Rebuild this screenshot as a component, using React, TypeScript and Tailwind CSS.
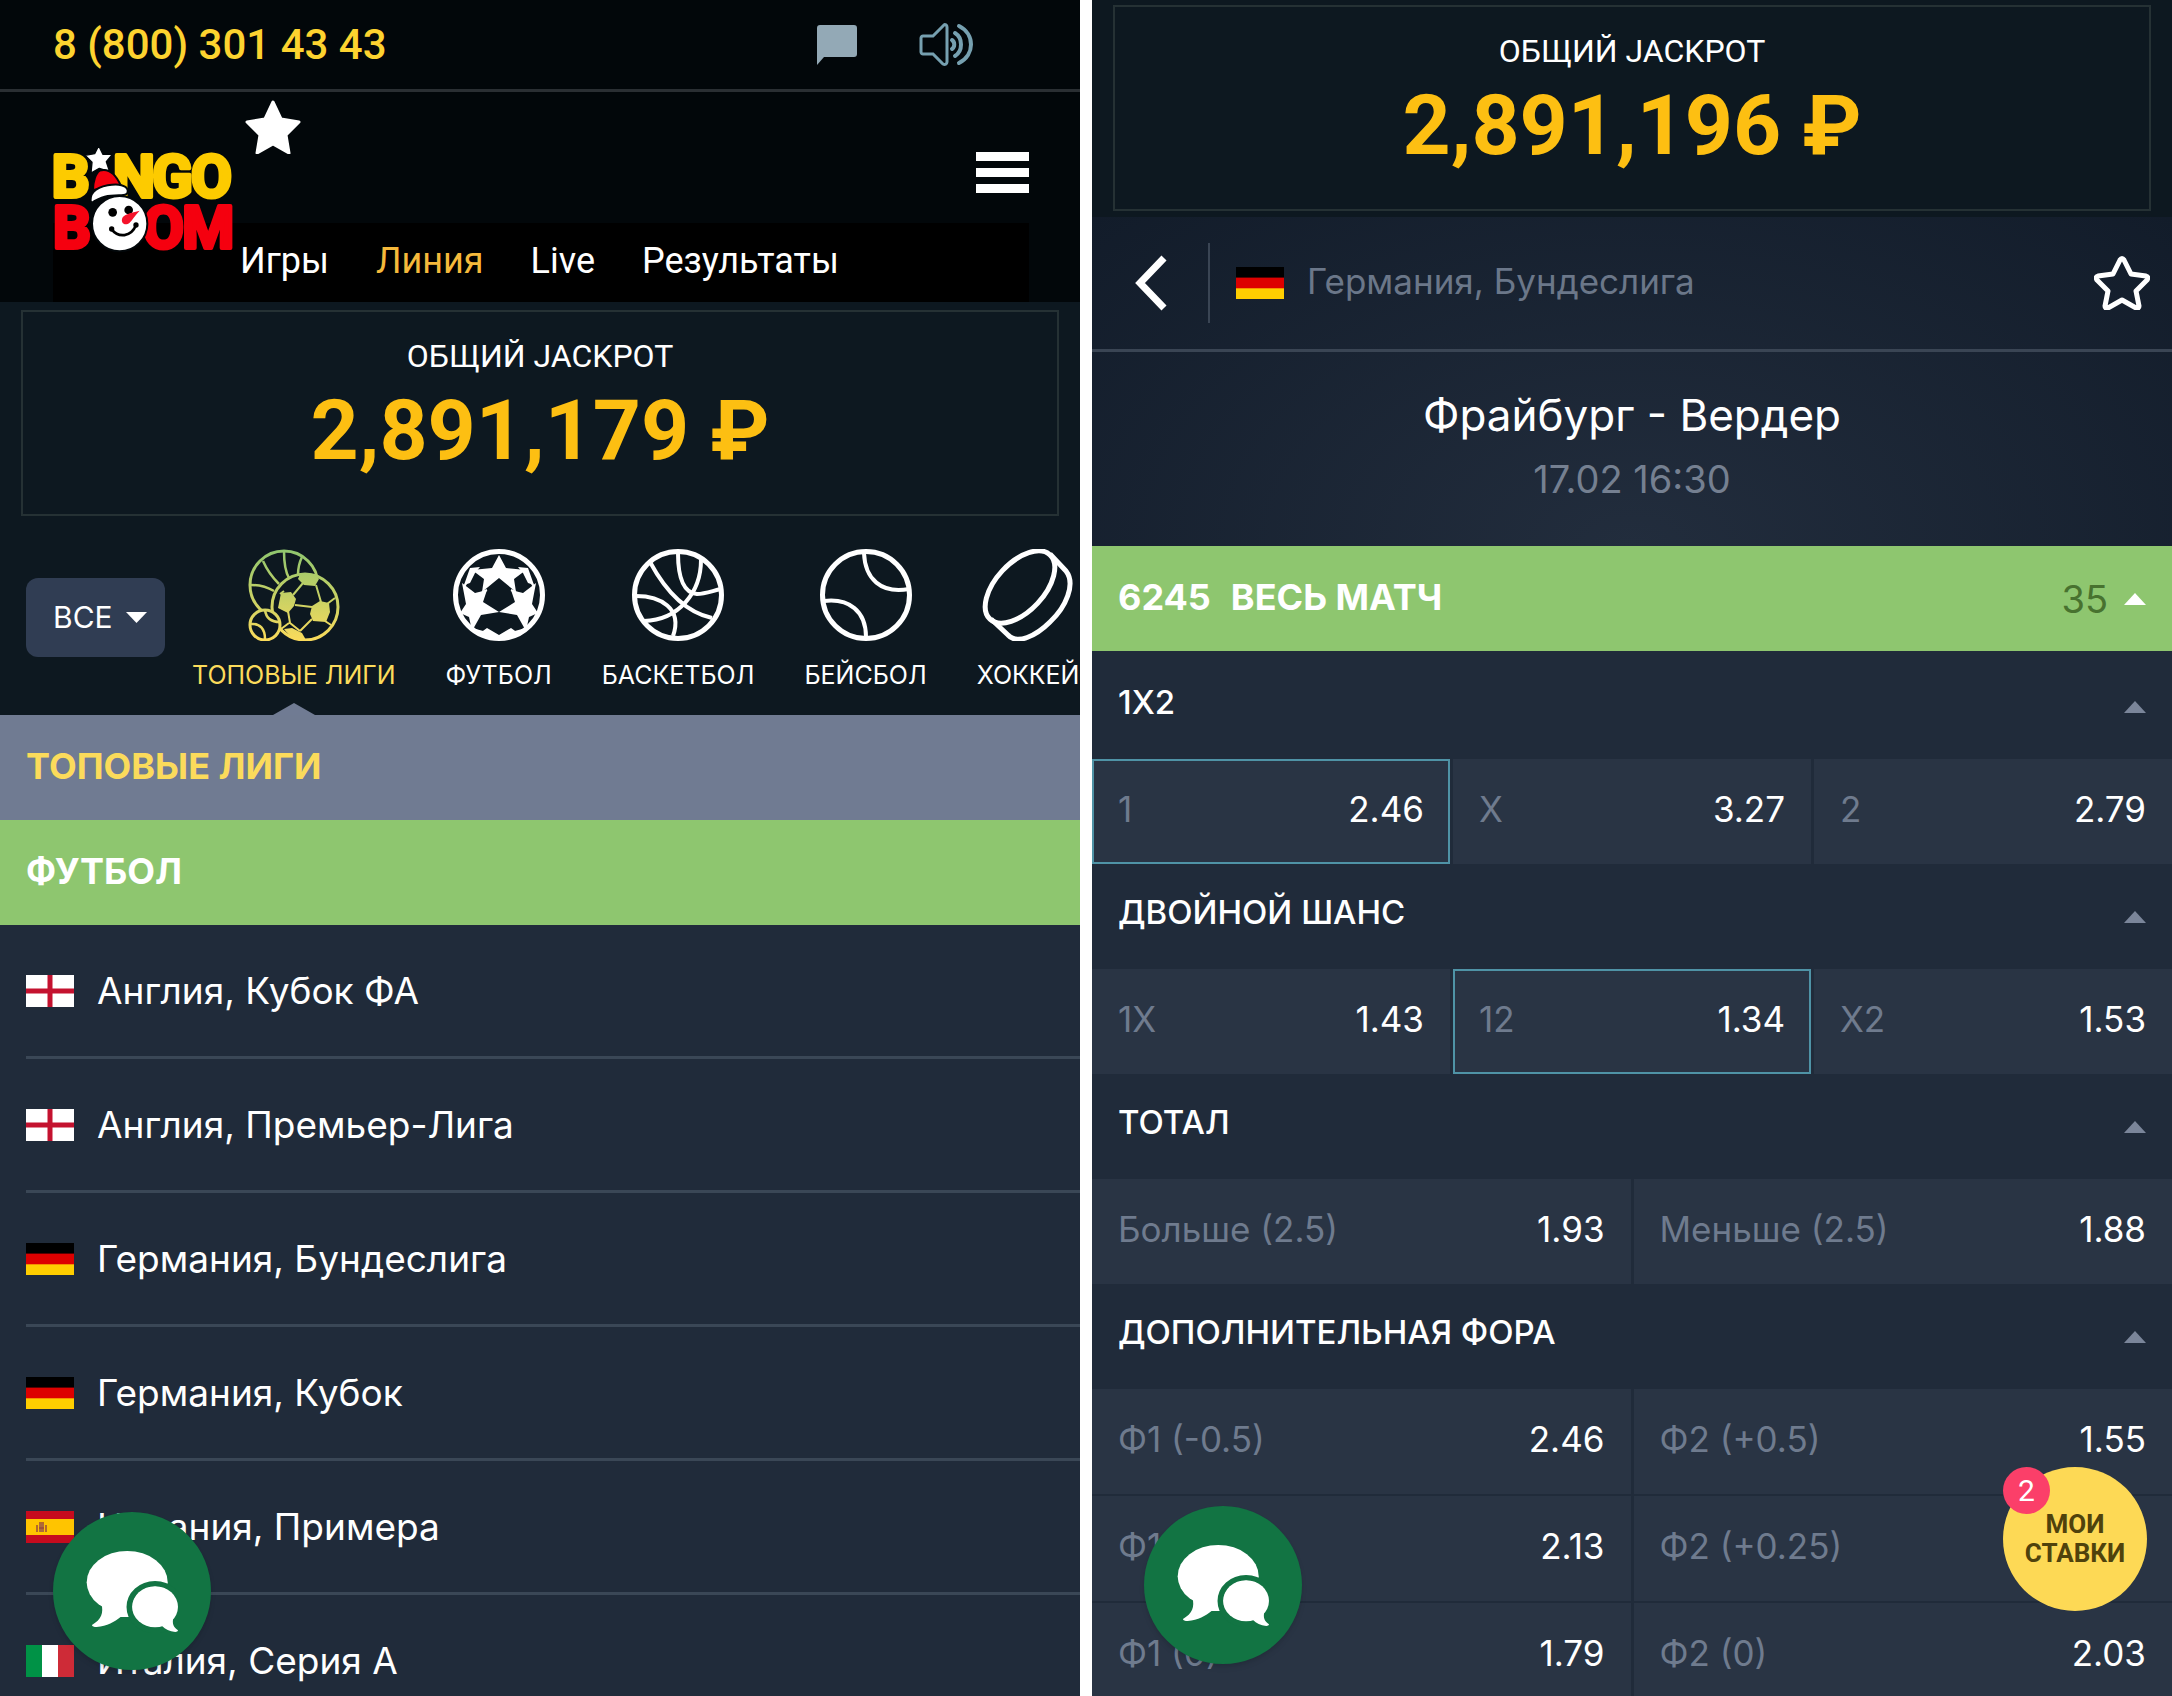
import type { ReactNode } from "react";

type Country = "england" | "germany" | "spain" | "italy";

const leagues: { country: Country; name: string }[] = [
  { country: "england", name: "Англия, Кубок ФА" },
  { country: "england", name: "Англия, Премьер-Лига" },
  { country: "germany", name: "Германия, Бундеслига" },
  { country: "germany", name: "Германия, Кубок" },
  { country: "spain", name: "Испания, Примера" },
  { country: "italy", name: "Италия, Серия А" },
];

type Outcome = { label: string; odds: string; selected?: boolean };

const markets: { title: string; rows: Outcome[][] }[] = [
  {
    title: "1X2",
    rows: [
      [
        { label: "1", odds: "2.46", selected: true },
        { label: "X", odds: "3.27" },
        { label: "2", odds: "2.79" },
      ],
    ],
  },
  {
    title: "ДВОЙНОЙ ШАНС",
    rows: [
      [
        { label: "1X", odds: "1.43" },
        { label: "12", odds: "1.34", selected: true },
        { label: "X2", odds: "1.53" },
      ],
    ],
  },
  {
    title: "ТОТАЛ",
    rows: [
      [
        { label: "Больше (2.5)", odds: "1.93" },
        { label: "Меньше (2.5)", odds: "1.88" },
      ],
    ],
  },
  {
    title: "ДОПОЛНИТЕЛЬНАЯ ФОРА",
    rows: [
      [
        { label: "Ф1 (-0.5)", odds: "2.46" },
        { label: "Ф2 (+0.5)", odds: "1.55" },
      ],
      [
        { label: "Ф1 (-0.25)", odds: "2.13" },
        { label: "Ф2 (+0.25)", odds: "1.72" },
      ],
      [
        { label: "Ф1 (0)", odds: "1.79" },
        { label: "Ф2 (0)", odds: "2.03" },
      ],
    ],
  },
];

function Flag({ country }: { country: Country }) {
  return (
    <svg viewBox="0 0 48 32" className="h-8 w-12 shrink-0" aria-hidden="true">
      {country === "england" && (
        <>
          <rect width="48" height="32" fill="#fff" />
          <path d="M24 0v32M0 16h48" stroke="#c4122f" strokeWidth="5" />
        </>
      )}
      {country === "germany" && (
        <>
          <rect width="48" height="32" fill="#000" />
          <rect y="10.6" width="48" height="21.4" fill="#d00" />
          <rect y="21.3" width="48" height="10.7" fill="#ffce00" />
        </>
      )}
      {country === "spain" && (
        <>
          <rect width="48" height="32" fill="#c60b1e" />
          <rect y="8" width="48" height="16" fill="#ffc400" />
          <path d="M13 13h5v8h-5z" fill="#ad6a3c" />
          <path d="M11 14v7M20 14v7M13 12h5M13 17h5" stroke="#9a4a3a" strokeWidth="1.5" />
        </>
      )}
      {country === "italy" && (
        <>
          <rect width="48" height="32" fill="#fff" />
          <rect width="16" height="32" fill="#009246" />
          <rect x="32" width="16" height="32" fill="#ce2b37" />
        </>
      )}
    </svg>
  );
}

function Logo() {
  return (
    <svg
      viewBox="38 165 540 321"
      className="relative z-10 h-[107px] w-[180px] shrink-0 overflow-visible"
      fontFamily="'Liberation Sans Narrow', 'Roboto', sans-serif"
      fontWeight="700"
      fontSize="178"
      strokeWidth="12"
      strokeLinejoin="round"
      role="img"
      aria-label="Bingo Boom"
    >
      <g fill="#fdcb00" stroke="#fdcb00">
        <text x="34" y="321">B</text>
        <text x="218 336 452" y="321">NGO</text>
      </g>
      <g fill="#f5000f" stroke="#f5000f">
        <text x="38" y="474">B</text>
        <text x="308 426" y="474">OM</text>
      </g>
      <path
        d="M175 167l13 26 28 0-18 22 10 30-31-10-25 14 3-32-21-21 29-5z"
        fill="#fff"
        stroke="#02070a"
        strokeWidth="4"
      />
      <path
        d="M158 300c0-26 8-50 20-58 26-8 48 10 64 46z"
        fill="#f5000f"
        stroke="#02070a"
        strokeWidth="6"
      />
      <path
        d="M152 340c-6-28 10-46 50-54 34-6 56 0 60 14 2 12-4 16-26 16-34 0-52 4-84 24z"
        fill="#fff"
        stroke="#02070a"
        strokeWidth="6"
      />
      <circle cx="238" cy="401" r="83" fill="#fff" stroke="#02070a" strokeWidth="6" />
      <circle cx="217" cy="367" r="13" />
      <circle cx="265" cy="360" r="13" />
      <path d="M246 384c4-10 20-14 52-22-14 14-22 28-30 36-14 12-28 0-22-14z" fill="#f5122a" />
      <path
        d="M214 418c20 26 58 24 73-12"
        fill="none"
        stroke="#000"
        strokeWidth="8"
        strokeLinecap="round"
      />
      <circle cx="214" cy="417" r="8" />
      <circle cx="287" cy="405" r="8" />
    </svg>
  );
}

function Caret({ className }: { className: string }) {
  return (
    <svg
      viewBox="0 0 22 12"
      preserveAspectRatio="none"
      className={className}
      fill="currentColor"
      aria-hidden="true"
    >
      <path d="M0 12L11 0l11 12z" />
    </svg>
  );
}

function BallSvg({ children }: { children: ReactNode }) {
  return (
    <svg
      viewBox="0 0 92 92"
      className="size-[92px]"
      fill="none"
      stroke="currentColor"
      strokeWidth="5"
      aria-hidden="true"
    >
      {children}
    </svg>
  );
}

function TopLeaguesIcon() {
  return (
    <svg viewBox="0 0 92 92" className="size-[92px]" fill="none" aria-hidden="true">
      <defs>
        <linearGradient id="balls" gradientUnits="userSpaceOnUse" x1="0" y1="0" x2="0" y2="92">
          <stop offset="0" stopColor="#8ec66f" />
          <stop offset="1" stopColor="#fbdb5b" />
        </linearGradient>
      </defs>
      <g stroke="url(#balls)" strokeWidth="3">
        <ellipse cx="36" cy="36" rx="34" ry="34" />
        <path
          d="M36 2c0 10 1 20 5 27M15 12c4 9 9 16 16 23M54 8c-3 6-4 12-4 18M3 36c9 0 16 2 23 6"
          strokeWidth="2.5"
        />
        <circle cx="57" cy="58" r="33" fill="#0d1820" />
        <path
          d="M45 46l10-12M68 36l5 17M64 58l-17-2M40 62l2 12 10 8M52 82l12-12M36 42l-4 3M79 55l8-6M77 72l6 4M41 74l-8 6"
          strokeWidth="2"
        />
        <circle cx="17" cy="76" r="15" fill="#0d1820" />
        <path d="M17 61c1 8 6 12 15 12M3 75c9-1 14 5 14 15" strokeWidth="2.5" />
      </g>
      <g fill="url(#balls)">
        <path d="M52 25h15l4 5-4 7-11-1-6-6z" />
        <path d="M33 44l10-1 5 7-2 7-6 7-10-5z" />
        <path d="M64 57l8-5 9 2 1 9-4 10-13-1-3-7z" />
        <path d="M36 80l8-1 10 5 4 7c-10 0-17-4-22-11z" />
      </g>
    </svg>
  );
}

function FootballIcon() {
  return (
    <BallSvg>
      <circle cx="46" cy="46" r="43.5" />
      <g fill="currentColor" stroke="none">
        <path d="M46 6l7 13 20 2-12 9 2 13-17-14-17 14 2-13-12-9 20-2z" />
        <path d="M9 34l13 10 12-3-4 12 16 10-18 3-9 16-3-14-9-4 6-9z" />
        <path d="M83 34l-13 10-12-3 4 12-16 10 18 3 9 16 3-14 9-4-6-9z" />
        <path d="M27 84l7-5 12 7 12-7 7 5-19 6z" />
        <path d="M17 19l10-1-5 6-5 10-6 2z" />
        <path d="M75 19l-10-1 5 6 5 10 6 2z" />
      </g>
      <path d="M29 43l5-2M63 43l-5-2M11 38l7-12M81 38l-7-12M19 80l11 3M73 80l-11 3" strokeWidth="2" />
    </BallSvg>
  );
}

function BasketballIcon() {
  return (
    <BallSvg>
      <circle cx="46" cy="46" r="43.5" />
      <g strokeWidth="4">
        <path d="M18 13c14 26 34 50 62 56" />
        <path d="M46 4c0 26 6 40 19 41 8 0 15-3 24-5" />
        <path d="M69 11c0 32-22 60-57 61" />
        <path d="M4 47c24 0 47 12 37 40" />
      </g>
    </BallSvg>
  );
}

function BaseballIcon() {
  return (
    <BallSvg>
      <circle cx="46" cy="46" r="43.5" />
      <g strokeWidth="4">
        <path d="M44 4c1 26 17 41 45 36" />
        <path d="M4 52c25-3 42 10 42 36" />
      </g>
    </BallSvg>
  );
}

function HockeyIcon() {
  return (
    <BallSvg>
      <ellipse cx="38" cy="38" rx="44" ry="24" transform="rotate(-47 38 38)" />
      <path d="M68 5l16 17c10 13 0 36-16 51-14 14-33 23-42 13L9 70" strokeLinejoin="round" />
    </BallSvg>
  );
}

const sports: { name: string; icon: ReactNode; active?: boolean }[] = [
  { name: "ТОПОВЫЕ ЛИГИ", icon: <TopLeaguesIcon />, active: true },
  { name: "ФУТБОЛ", icon: <FootballIcon /> },
  { name: "БАСКЕТБОЛ", icon: <BasketballIcon /> },
  { name: "БЕЙСБОЛ", icon: <BaseballIcon /> },
  { name: "ХОККЕЙ", icon: <HockeyIcon /> },
];

function Jackpot({ amount }: { amount: string }) {
  return (
    <div className="mx-[21px] flex h-[206px] flex-col items-center border-2 border-[#253134] pt-6 font-['Roboto',sans-serif]">
      <p className="text-[32px] leading-10 text-white">ОБЩИЙ JACKPOT</p>
      <p className="text-[84px] leading-[110px] font-bold text-[#fdbf12]">{amount} ₽</p>
    </div>
  );
}

function ChatButton({ className }: { className: string }) {
  return (
    <button
      aria-label="Чат"
      className={`absolute flex size-[158px] items-center justify-center rounded-full bg-[#127443] shadow-md ${className}`}
    >
      <svg viewBox="290 430 280 250" className="h-[83px] w-[93px]" fill="#fff" aria-hidden="true">
        <ellipse cx="414" cy="527" rx="122" ry="94" />
        <path d="M336 590c8 30 0 50-28 66 0 5 6 6 14 6 32-2 54-16 72-30h40v-60z" />
        <ellipse cx="498" cy="602" rx="77" ry="70" fill="none" stroke="#127443" strokeWidth="18" />
        <ellipse cx="498" cy="601" rx="69" ry="62" />
        <path d="M553 634c-4 18 0 28 14 38 0 4-4 5-8 5-18-2-30-8-40-18z" />
      </svg>
    </button>
  );
}

function LineScreen() {
  return (
    <section className="relative min-w-0 overflow-hidden bg-[#202b3a]">
      <header className="bg-[#02070a] font-['Roboto',sans-serif]">
        <div className="flex h-[92px] items-center border-b-3 border-[#2a2f33] pr-[106px] pl-[53px]">
          <a href="tel:88003014343" className="text-[42px] leading-none font-medium text-[#fdd32f]">
            8 (800) 301 43 43
          </a>
          <button aria-label="Сообщения" className="ml-auto">
            <svg viewBox="0 0 40 40" className="size-10" fill="#93a9b6" aria-hidden="true">
              <path d="M3 0h34a3 3 0 0 1 3 3v26a3 3 0 0 1-3 3H7l-7 8V3a3 3 0 0 1 3-3z" />
            </svg>
          </button>
          <button aria-label="Звук" className="ml-[62px]">
            <svg
              viewBox="0 0 55 43"
              className="h-[43px] w-[55px]"
              fill="none"
              stroke="#76a0b0"
              strokeWidth="3"
              strokeLinecap="round"
              aria-hidden="true"
            >
              <path d="M4 13h10L25 2c1-1 3 0 3 2v35c0 2-2 3-4 2L14 31H4c-1 0-2-1-2-2V15c0-1 1-2 2-2z" />
              <path d="M33 17c3 2 3 7 0 9M36 10c8 5 8 18 0 23M40 3c16 8 16 29 0 37" strokeWidth="4" />
            </svg>
          </button>
        </div>

        <div className="flex h-[131px] items-start pr-[51px] pl-[53px]">
          <a href="#home" className="mt-[53px]">
            <Logo />
          </a>
          <button aria-label="Избранное" className="mt-2 ml-3">
            <svg
              viewBox="0 0 56 54"
              className="h-[54px] w-14"
              fill="#fff"
              stroke="#fff"
              strokeWidth="3"
              strokeLinejoin="round"
              aria-hidden="true"
            >
              <path d="M28 2l8 17 18 3-13 13 3 18-16-9-16 9 3-18L2 22l18-3z" />
            </svg>
          </button>
          <button aria-label="Меню" className="mt-[60px] ml-auto flex w-[53px] flex-col gap-[7px]">
            <span className="h-[9px] bg-white" />
            <span className="h-[9px] bg-white" />
            <span className="h-[9px] bg-white" />
          </button>
        </div>

        <nav className="mr-[51px] ml-[53px] flex h-[79px] items-center gap-[47px] bg-black pb-1 pl-[187px] text-[36px] leading-none text-white">
          <a href="#games">Игры</a>
          <a href="#line" className="text-[#f5b93b]">
            Линия
          </a>
          <a href="#live">Live</a>
          <a href="#results">Результаты</a>
        </nav>
      </header>

      <div className="bg-[#0d1820] pt-2">
        <Jackpot amount="2,891,179" />

        <div className="flex h-[199px] items-start pt-[33px] pl-[26px]">
          <label className="relative mt-[29px] block shrink-0 text-white">
            <span className="sr-only">Вид спорта</span>
            <select className="h-[79px] w-[139px] appearance-none rounded-xl bg-[#303d53] pl-[27px] text-[30px]">
              <option>ВСЕ</option>
            </select>
            <Caret className="pointer-events-none absolute top-[34px] right-[18px] h-[11px] w-[21px] rotate-180" />
          </label>
          <ul className="ml-[27px] flex gap-[50px] text-[25px] leading-8 whitespace-nowrap text-white">
            {sports.map((sport) => (
              <li key={sport.name} className="relative shrink-0">
                <a
                  href="#line"
                  className={`flex flex-col items-center gap-[18px] ${sport.active ? "text-[#fbdb5b]" : ""}`}
                >
                  {sport.icon}
                  {sport.name}
                </a>
                {sport.active && (
                  <Caret className="absolute top-[154px] left-1/2 h-3 w-[42px] -translate-x-1/2 text-[#707b93]" />
                )}
              </li>
            ))}
          </ul>
        </div>
      </div>

      <h2 className="flex h-[105px] items-center bg-[#707b92] pb-1 pl-[26px] text-[36px] leading-none font-bold text-[#fbdb5b]">
        ТОПОВЫЕ ЛИГИ
      </h2>
      <h3 className="flex h-[105px] items-center bg-[#8ec66f] pb-1 pl-[26px] text-[36px] leading-none font-bold text-white">
        ФУТБОЛ
      </h3>

      <ul className="pl-[26px] text-[37px] leading-none text-white">
        {leagues.map((league) => (
          <li key={league.name} className="border-b-3 border-[#3a4756]">
            <a href="#league" className="flex h-[131px] items-center gap-[23px]">
              <Flag country={league.country} />
              {league.name}
            </a>
          </li>
        ))}
      </ul>

      <ChatButton className="bottom-[26px] left-[53px]" />
    </section>
  );
}

function MatchScreen() {
  return (
    <section className="relative min-w-0 overflow-hidden bg-[#202b3a] text-[35px] leading-none">
      <div className="bg-[#0d1820] pt-[5px] pb-[6px]">
        <Jackpot amount="2,891,196" />
      </div>

      <header className="bg-[radial-gradient(ellipse_at_bottom,#222d3d,#121c2a)]">
        <div className="flex h-[135px] items-center border-b-3 border-[#3a4554] pr-[22px] pl-10 text-[#6b7789]">
          <button aria-label="Назад">
            <svg
              viewBox="0 0 36 56"
              className="h-14 w-9"
              fill="none"
              stroke="#fff"
              strokeWidth="7"
              aria-hidden="true"
            >
              <path d="M32 3L8 28l24 25" />
            </svg>
          </button>
          <span className="mr-[26px] ml-10 h-20 w-[2px] bg-[#3a4554]" />
          <Flag country="germany" />
          <span className="ml-[23px] pb-1">Германия, Бундеслига</span>
          <button aria-label="В избранное" className="ml-auto">
            <svg
              viewBox="0 0 56 54"
              className="h-[54px] w-14"
              fill="none"
              stroke="#fff"
              strokeWidth="5"
              strokeLinejoin="round"
              aria-hidden="true"
            >
              <path d="M26 4q2-3 4 0l7 14 15 2q3 1 1 4L42 35l3 15q0 3-3 2l-14-8-14 8q-3 1-3-2l3-15L3 24q-2-3 1-4l15-2z" />
            </svg>
          </button>
        </div>
        <div className="flex h-[194px] flex-col items-center pt-[38px]">
          <h1 className="text-[44px] leading-[50px] text-white">Фрайбург - Вердер</h1>
          <p className="mt-4 text-[38px] leading-[46px] text-[#758091]">17.02 16:30</p>
        </div>
      </header>

      <button className="flex h-[105px] w-full items-center bg-[#8ec66f] px-[26px] text-[36px] font-bold text-white">
        <span className="pb-1">6245</span>
        <span className="ml-5 pb-1">ВЕСЬ МАТЧ</span>
        <span className="ml-auto text-[38px] font-normal text-[#48722f]">35</span>
        <Caret className="ml-4 h-3 w-[22px]" />
      </button>

      <div className="pt-[3px]">
        {markets.map((market) => (
          <div key={market.title}>
            <button className="flex h-[105px] w-full items-center justify-between px-[26px] text-[33px] font-medium text-white">
              <span className="pb-2">{market.title}</span>
              <Caret className="h-3 w-[22px] text-[#7b869a]" />
            </button>
            <div className="flex flex-col gap-[2px]">
              {market.rows.map((row) => (
                <div key={row[0].label} className="flex gap-[3px]">
                  {row.map((outcome) => (
                    <button
                      key={outcome.label}
                      className={`flex h-[105px] min-w-0 flex-1 items-center justify-between border-2 bg-[#293444] px-6 pb-1 ${
                        outcome.selected ? "border-[#4f93a6]" : "border-[#293444]"
                      }`}
                    >
                      <span className="text-[#6f7b8e]">{outcome.label}</span>
                      <span className="text-white">{outcome.odds}</span>
                    </button>
                  ))}
                </div>
              ))}
            </div>
          </div>
        ))}
      </div>

      <ChatButton className="bottom-8 left-[52px]" />
      <button className="absolute right-[25px] bottom-[85px] flex size-36 flex-col items-center justify-center rounded-full bg-[#fdd955] font-['Roboto',sans-serif] text-[26px] leading-[29px] font-bold text-[#4f420c]">
        <span>МОИ</span>
        <span>СТАВКИ</span>
        <span className="absolute top-0 left-0 flex size-[47px] items-center justify-center rounded-full bg-[#fb3f69] text-[30px] font-normal text-white">
          2
        </span>
      </button>
    </section>
  );
}

export default function App() {
  return (
    <main className="grid h-screen grid-cols-2 gap-3 overflow-hidden bg-white font-['Inter',sans-serif]">
      <LineScreen />
      <MatchScreen />
    </main>
  );
}
